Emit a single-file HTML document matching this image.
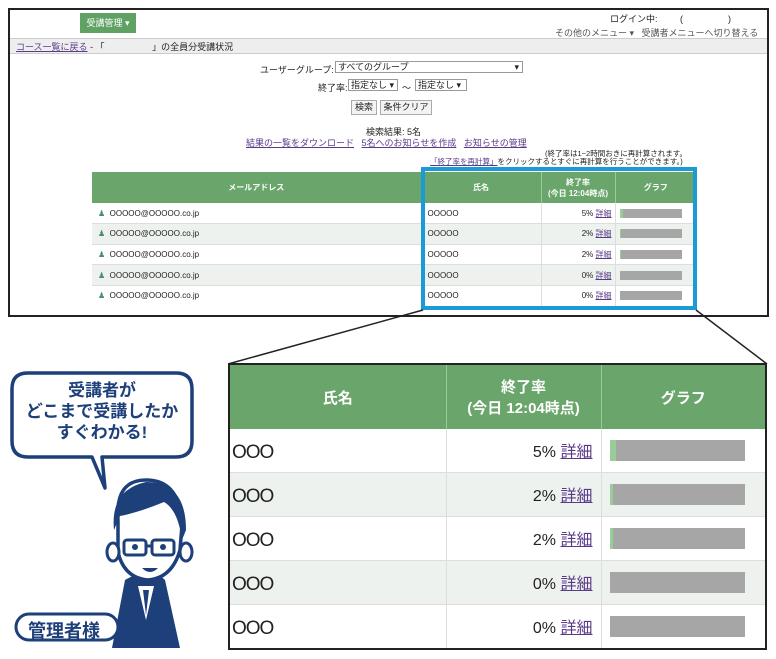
<!DOCTYPE html>
<html><head><meta charset="utf-8"><style>
*{margin:0;padding:0;box-sizing:border-box}
body{width:776px;height:659px;background:#fff;position:relative;overflow:hidden;font-family:"Liberation Sans","Noto Sans CJK JP",sans-serif;color:#222}
.a{position:absolute}
.lnk{color:#5a3b8a;text-decoration:underline}
.s{font-size:9px}
table{border-collapse:collapse;position:absolute}
td{vertical-align:middle}
.o{letter-spacing:0}
.O{letter-spacing:-1px;font-size:19px;padding-left:2px;padding-top:6px}
</style></head><body>
<div class="a" style="left:8px;top:8px;width:761px;height:309px;border:2px solid #222"></div>
<div class="a" style="left:80px;top:13px;width:56px;height:20px;background:#5fa264;color:#fff;font-size:9px;line-height:20px;text-align:center">受講管理 ▾</div>
<div class="a s" style="left:610px;top:12px">ログイン中:&nbsp;&nbsp;&nbsp;&nbsp;&nbsp;&nbsp;&nbsp;&nbsp;&nbsp;(&nbsp;&nbsp;&nbsp;&nbsp;&nbsp;&nbsp;&nbsp;&nbsp;&nbsp;&nbsp;&nbsp;&nbsp;&nbsp;&nbsp;&nbsp;&nbsp;&nbsp;&nbsp;)</div>
<div class="a s" style="left:555px;top:26px;color:#555">その他のメニュー ▾&nbsp;&nbsp;&nbsp;受講者メニューへ切り替える</div>
<div class="a" style="left:10px;top:38px;width:757px;height:16px;background:#eeeeee;border-top:1px solid #ccc;border-bottom:1px solid #ccc"></div>
<div class="a s" style="left:16px;top:40px"><span class="lnk">コース一覧に戻る</span> - 「&nbsp;&nbsp;&nbsp;&nbsp;&nbsp;&nbsp;&nbsp;&nbsp;&nbsp;&nbsp;&nbsp;&nbsp;&nbsp;&nbsp;&nbsp;&nbsp;&nbsp;&nbsp;&nbsp;」の全員分受講状況</div>
<div class="a s" style="left:260px;top:63px">ユーザーグループ:</div>
<div class="a s" style="left:335px;top:61px;width:188px;height:12px;border:1px solid #999;line-height:10px;padding-left:2px">すべてのグループ<span style="float:right;margin-right:3px">▾</span></div>
<div class="a s" style="left:318px;top:81px">終了率:</div>
<div class="a s" style="left:348px;top:79px;width:50px;height:12px;border:1px solid #999;line-height:10px;padding-left:2px">指定なし ▾</div>
<div class="a s" style="left:402px;top:81px">～</div>
<div class="a s" style="left:415px;top:79px;width:52px;height:12px;border:1px solid #999;line-height:10px;padding-left:2px">指定なし ▾</div>
<div class="a s" style="left:351px;top:100px;width:26px;height:15px;border:1px solid #aaa;background:#f3f3f3;text-align:center;line-height:13px">検索</div>
<div class="a s" style="left:380px;top:100px;width:52px;height:15px;border:1px solid #aaa;background:#f3f3f3;text-align:center;line-height:13px">条件クリア</div>
<div class="a s" style="left:366px;top:125px">検索結果: 5名</div>
<div class="a s" style="left:246px;top:136px"><span class="lnk">結果の一覧をダウンロード</span>&nbsp;&nbsp;&nbsp;<span class="lnk">5名へのお知らせを作成</span>&nbsp;&nbsp;&nbsp;<span class="lnk">お知らせの管理</span></div>
<div class="a" style="left:545px;top:148px;font-size:7.5px">(終了率は1~2時間おきに再計算されます。</div>
<div class="a" style="left:430px;top:156px;font-size:7.5px"><span class="lnk">「終了率を再計算」</span>をクリックするとすぐに再計算を行うことができます。)</div>

<table style="left:92px;top:172px;width:604px;font-size:8px">
<tr style="background:#6aa56b;color:#fff;height:31px;text-align:center;font-weight:bold"><td style="width:329px">メールアドレス</td><td style="width:120px;border-left:1px solid #9c9">氏名</td><td style="width:74px;border-left:1px solid #9c9">終了率<br>(今日 12:04時点)</td><td style="border-left:1px solid #9c9">グラフ</td></tr>
<tr style="height:20.6px;border-bottom:1px solid #ddd"><td style="padding-left:6px"><span style="color:#4a8a7a">♟</span>&nbsp;&nbsp;<span class="o">OOOOO@OOOOO.co.jp</span></td><td style="border-left:1px solid #ddd;padding-left:6px" class="o">OOOOO</td><td style="text-align:right;padding-right:3px;border-left:1px solid #ddd">5% <span class="lnk">詳細</span></td><td style="border-left:1px solid #ddd;padding-left:4px"><div style="width:62px;height:9px;background:#a6a6a6;border-left:3px solid #9c9"></div></td></tr>
<tr style="height:20.6px;background:#eef2ee;border-bottom:1px solid #ddd"><td style="padding-left:6px"><span style="color:#4a8a7a">♟</span>&nbsp;&nbsp;<span class="o">OOOOO@OOOOO.co.jp</span></td><td style="border-left:1px solid #ddd;padding-left:6px" class="o">OOOOO</td><td style="text-align:right;padding-right:3px;border-left:1px solid #ddd">2% <span class="lnk">詳細</span></td><td style="border-left:1px solid #ddd;padding-left:4px"><div style="width:62px;height:9px;background:#a6a6a6;border-left:1px solid #9c9"></div></td></tr>
<tr style="height:20.6px;border-bottom:1px solid #ddd"><td style="padding-left:6px"><span style="color:#4a8a7a">♟</span>&nbsp;&nbsp;<span class="o">OOOOO@OOOOO.co.jp</span></td><td style="border-left:1px solid #ddd;padding-left:6px" class="o">OOOOO</td><td style="text-align:right;padding-right:3px;border-left:1px solid #ddd">2% <span class="lnk">詳細</span></td><td style="border-left:1px solid #ddd;padding-left:4px"><div style="width:62px;height:9px;background:#a6a6a6;border-left:1px solid #9c9"></div></td></tr>
<tr style="height:20.6px;background:#eef2ee;border-bottom:1px solid #ddd"><td style="padding-left:6px"><span style="color:#4a8a7a">♟</span>&nbsp;&nbsp;<span class="o">OOOOO@OOOOO.co.jp</span></td><td style="border-left:1px solid #ddd;padding-left:6px" class="o">OOOOO</td><td style="text-align:right;padding-right:3px;border-left:1px solid #ddd">0% <span class="lnk">詳細</span></td><td style="border-left:1px solid #ddd;padding-left:4px"><div style="width:62px;height:9px;background:#a6a6a6"></div></td></tr>
<tr style="height:20.6px"><td style="padding-left:6px"><span style="color:#4a8a7a">♟</span>&nbsp;&nbsp;<span class="o">OOOOO@OOOOO.co.jp</span></td><td style="border-left:1px solid #ddd;padding-left:6px" class="o">OOOOO</td><td style="text-align:right;padding-right:3px;border-left:1px solid #ddd">0% <span class="lnk">詳細</span></td><td style="border-left:1px solid #ddd;padding-left:4px"><div style="width:62px;height:9px;background:#a6a6a6"></div></td></tr>
</table>
<div class="a" style="left:421px;top:167px;width:276px;height:143px;border:4px solid #1a9ad6"></div>

<svg class="a" style="left:0;top:0" width="776" height="659"><line x1="423" y1="310" x2="228" y2="364" stroke="#222" stroke-width="1.5"/><line x1="696" y1="310" x2="767" y2="364" stroke="#222" stroke-width="1.5"/></svg>

<table style="left:228px;top:363px;width:539px;height:287px;border:2px solid #222;font-size:16px">
<tr style="background:#6aa56b;color:#fff;height:65px;text-align:center;font-weight:bold;font-size:15px"><td style="width:217px">氏名</td><td style="width:155px;border-left:1px solid #9c9">終了率<br>(今日 12:04時点)</td><td style="border-left:1px solid #9c9">グラフ</td></tr>
<tr style="border-bottom:1px solid #ddd"><td class="O">OOO</td><td style="text-align:right;padding-right:8px;border-left:1px solid #ddd">5% <span class="lnk">詳細</span></td><td style="border-left:1px solid #ddd;padding-left:8px"><div style="width:135px;height:21px;background:#a6a6a6;border-left:6px solid #9c9"></div></td></tr>
<tr style="border-bottom:1px solid #ddd;background:#eef2ee"><td class="O">OOO</td><td style="text-align:right;padding-right:8px;border-left:1px solid #ddd">2% <span class="lnk">詳細</span></td><td style="border-left:1px solid #ddd;padding-left:8px"><div style="width:135px;height:21px;background:#a6a6a6;border-left:3px solid #9c9"></div></td></tr>
<tr style="border-bottom:1px solid #ddd"><td class="O">OOO</td><td style="text-align:right;padding-right:8px;border-left:1px solid #ddd">2% <span class="lnk">詳細</span></td><td style="border-left:1px solid #ddd;padding-left:8px"><div style="width:135px;height:21px;background:#a6a6a6;border-left:3px solid #9c9"></div></td></tr>
<tr style="border-bottom:1px solid #ddd;background:#eef2ee"><td class="O">OOO</td><td style="text-align:right;padding-right:8px;border-left:1px solid #ddd">0% <span class="lnk">詳細</span></td><td style="border-left:1px solid #ddd;padding-left:8px"><div style="width:135px;height:21px;background:#a6a6a6"></div></td></tr>
<tr><td class="O">OOO</td><td style="text-align:right;padding-right:8px;border-left:1px solid #ddd">0% <span class="lnk">詳細</span></td><td style="border-left:1px solid #ddd;padding-left:8px"><div style="width:135px;height:21px;background:#a6a6a6"></div></td></tr>
</table>

<svg class="a" style="left:0;top:330px" width="230" height="329">
<path d="M28 43 Q12 43 12 59 L12 111 Q12 127 28 127 L92 127 L105 158 L102 127 L176 127 Q192 127 192 111 L192 59 Q192 43 176 43 Z" fill="#fff" stroke="#1d3f7a" stroke-width="3.5" stroke-linejoin="round"/>
<path d="M112 318 L125 250 Q150 235 165 250 L180 318 Z" fill="#1d3f7a"/>
<path d="M138 256 L146 290 L154 256 Z" fill="#fff"/>
<path d="M143 260 L146 285 L149 260 Z" fill="#1d3f7a"/>
<path d="M118 190 Q115 150 146 150 Q180 150 182 195 L180 220 Q172 248 148 250 Q124 248 118 222 Z" fill="#fff" stroke="#1d3f7a" stroke-width="3.5"/>
<path d="M114 200 Q110 160 146 152 Q186 152 186 200 L182 210 Q178 180 164 172 Q140 182 120 186 Z" fill="#1d3f7a"/>
<ellipse cx="113" cy="222" rx="6" ry="9" fill="#fff" stroke="#1d3f7a" stroke-width="3"/>
<ellipse cx="186" cy="222" rx="6" ry="9" fill="#fff" stroke="#1d3f7a" stroke-width="3"/>
<rect x="124" y="210" width="22" height="15" rx="3" fill="none" stroke="#1d3f7a" stroke-width="3"/>
<rect x="152" y="210" width="22" height="15" rx="3" fill="none" stroke="#1d3f7a" stroke-width="3"/>
<line x1="146" y1="216" x2="152" y2="216" stroke="#1d3f7a" stroke-width="3"/>
<circle cx="135" cy="217" r="3" fill="#1d3f7a"/><circle cx="163" cy="217" r="3" fill="#1d3f7a"/>
<path d="M142 238 Q150 246 158 238 Z" fill="#1d3f7a"/>
<rect x="16" y="284" width="102" height="26" rx="13" fill="#fff" stroke="#1d3f7a" stroke-width="3"/>
</svg>
<div class="a" style="left:12px;top:380px;width:180px;text-align:center;color:#1d3f7a;font-size:17px;font-weight:bold;line-height:21px">受講者が<br>どこまで受講したか<br>すぐわかる!</div>
<div class="a" style="left:28px;top:617px;color:#1d3f7a;font-size:18px;font-weight:bold">管理者様</div>
</body></html>
